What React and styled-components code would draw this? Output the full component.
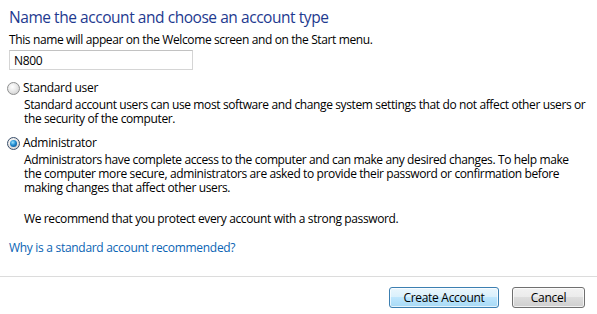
import React from "react";
import styled, { createGlobalStyle } from "styled-components";

const GlobalStyle = createGlobalStyle`
  html, body {
    margin: 0;
    padding: 0;
    background: #ffffff;
  }
  body {
    font-family: "Open Sans", "Noto Sans", "Liberation Sans", sans-serif;
    font-size: 12px;
    color: #000000;
  }
`;

const Page = styled.div`
  display: flex;
  flex-direction: column;
  height: 314px;
  box-sizing: border-box;
`;

const Content = styled.div`
  padding: 6px 5px 0 9px;
  flex: 1;
`;

const Title = styled.h1`
  margin: 0;
  font-size: 15.5px;
  font-weight: 400;
  line-height: 22px;
  color: #1e3a8f;
  letter-spacing: -0.45px;
`;

const Text = styled.p`
  margin: ${(p) => p.margin || "0"};
  line-height: 14px;
  letter-spacing: -0.38px;
  padding-left: ${(p) => (p.indent ? "15px" : "0")};
`;

const NameInput = styled.input`
  display: block;
  box-sizing: border-box;
  width: 184px;
  height: 20px;
  margin: 3px 0 0 0;
  padding: 0 4px;
  border: 1px solid #d5d5d5;
  border-top-color: #c2c2c2;
  font-family: inherit;
  font-size: 12px;
  letter-spacing: -0.3px;
  color: #000;
  outline: none;
`;

const Option = styled.div`
  margin-top: ${(p) => p.top || "10px"};
`;

const OptionRow = styled.label`
  display: flex;
  align-items: center;
  gap: 3px;
  line-height: 14px;
  letter-spacing: -0.3px;
  margin-left: -2px;
`;

const Radio = styled.span`
  position: relative;
  width: 11px;
  height: 11px;
  border-radius: 50%;
  border: 1px solid ${(p) => (p.checked ? "#3a4f6b" : "#8e8f8f")};
  background: radial-gradient(circle at 40% 35%, #ffffff 0%, #e9e9e9 45%, #c6c6c6 100%);
  box-sizing: content-box;
  &::after {
    content: "";
    display: ${(p) => (p.checked ? "block" : "none")};
    position: absolute;
    left: 2px;
    top: 2px;
    width: 7px;
    height: 7px;
    border-radius: 50%;
    background: radial-gradient(circle at 40% 35%, #9be3ff 0%, #1f8bd0 45%, #0f3e7a 100%);
  }
`;

const LinkText = styled.a`
  display: block;
  margin-top: 15px;
  color: #0a64b4;
  text-decoration: none;
  line-height: 14px;
  letter-spacing: -0.3px;
  cursor: pointer;
`;

const Footer = styled.div`
  border-top: 1px solid #dcdcdc;
  display: flex;
  justify-content: flex-end;
  gap: 13px;
  padding: 10px 12px 6px 0;
`;

const Button = styled.button`
  box-sizing: border-box;
  width: ${(p) => p.width};
  height: 21px;
  border-radius: 3px;
  border: 1px solid ${(p) => (p.primary ? "#3c7fb1" : "#707070")};
  background: ${(p) =>
    p.primary
      ? "linear-gradient(#eaf6fd 0%, #d9f0fc 49%, #bee6fd 50%, #a7d9f5 100%)"
      : "linear-gradient(#f2f2f2 0%, #ebebeb 49%, #dddddd 50%, #cfcfcf 100%)"};
  box-shadow: inset 0 0 0 1px rgba(255, 255, 255, 0.7);
  font-family: inherit;
  font-size: 12px;
  letter-spacing: -0.3px;
  color: #000;
  padding: 0;
`;

const App = () => {
  return (
    <Page>
      <GlobalStyle />
      <Content>
        <Title>Name the account and choose an account type</Title>
        <Text margin="5px 0 0 0">This name will appear on the Welcome screen and on the Start menu.</Text>
        <NameInput defaultValue="N800" />

        <Option top="11px">
          <OptionRow>
            <Radio />
            Standard user
          </OptionRow>
          <Text indent margin="3px 0 0 0">
            Standard account users can use most software and change system settings that do not affect other users or
            <br />
            the security of the computer.
          </Text>
        </Option>

        <Option top="10px">
          <OptionRow>
            <Radio checked />
            Administrator
          </OptionRow>
          <Text indent margin="3px 0 0 0">
            Administrators have complete access to the computer and can make any desired changes. To help make
            <br />
            the computer more secure, administrators are asked to provide their password or confirmation before
            <br />
            making changes that affect other users.
          </Text>
          <Text indent margin="17px 0 0 0">
            We recommend that you protect every account with a strong password.
          </Text>
        </Option>

        <LinkText>Why is a standard account recommended?</LinkText>
      </Content>
      <Footer>
        <Button primary width="110px">Create Account</Button>
        <Button width="73px">Cancel</Button>
      </Footer>
    </Page>
  );
};

export default App;
